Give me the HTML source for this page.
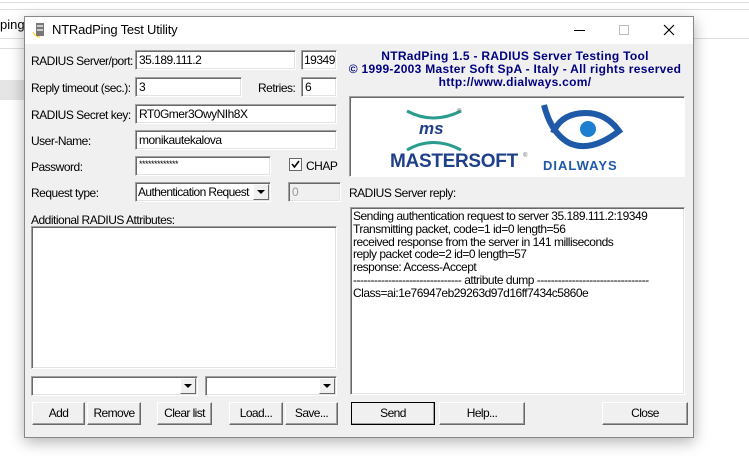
<!DOCTYPE html>
<html><head><style>
*{margin:0;padding:0;box-sizing:border-box}
body{width:749px;height:470px;background:#fff;position:relative;overflow:hidden;font-family:"Liberation Sans",sans-serif;font-size:12px;color:#000}
.a{position:absolute}
.t{position:absolute;white-space:nowrap;letter-spacing:-0.5px}
.f{position:absolute;background:#fff;border-top:1px solid #a0a0a0;border-left:1px solid #a0a0a0;border-right:1px solid #fff;border-bottom:1px solid #fff;box-shadow:inset 1px 1px 0 #696969,inset -1px -1px 0 #e3e3e3;padding:2px 3px;white-space:nowrap;letter-spacing:-0.5px;line-height:14px;overflow:hidden}
.b{position:absolute;background:#f0f0f0;border:1px solid;border-color:#fff #696969 #696969 #fff;box-shadow:inset -1px -1px 0 #a0a0a0;text-align:center;line-height:20px;letter-spacing:-0.6px}
.dd{position:absolute;width:16px;height:16px;background:#f0f0f0;border:1px solid;border-color:#fff #696969 #696969 #fff;top:1px;right:1px}
.dd:after{content:"";position:absolute;left:3px;top:5px;border:4px solid transparent;border-top:4px solid #000;border-bottom:0}
</style></head><body>
<div class="a" style="left:0;top:0;width:749px;height:3px;border-bottom:1px solid #ddd"></div>
<div class="a" style="left:0;top:9px;width:749px;border-top:1px solid #ddd"></div>
<div class="t" style="left:0;top:17px;font-size:13px;letter-spacing:0">ping</div>
<div class="a" style="left:0;top:38px;width:749px;border-top:1px solid #ddd"></div>
<div class="a" style="left:0;top:48px;width:24px;border-top:1px solid #ddd"></div>
<div class="a" style="left:0;top:80px;width:24px;height:20px;background:#e5e5e5"></div>
<div class="a" style="left:24px;top:16px;width:670px;height:422px;background:#f0f0f0;border:1px solid #888;box-shadow:0 4px 14px rgba(0,0,0,.3)"></div>
<div class="a" style="left:25px;top:17px;width:668px;height:27px;background:#fff"></div>
<svg class="a" style="left:32px;top:22px" width="16" height="16"><rect x="4" y="1" width="8" height="13" fill="#777"/><rect x="5" y="3" width="6" height="2" fill="#ccc"/><rect x="5" y="7" width="6" height="2" fill="#ccc"/><path d="M1 10 Q3 15 8 15" stroke="#fc0" fill="none"/></svg>
<div class="t" style="left:52px;top:22px;font-size:13px;letter-spacing:-0.2px">NTRadPing Test Utility</div>
<div class="a" style="left:574px;top:30px;width:11px;border-top:1px solid #000"></div>
<div class="a" style="left:619px;top:25px;width:10px;height:10px;border:1px solid #bbb"></div>
<svg class="a" style="left:663px;top:24px" width="12" height="12"><path d="M1 1L11 11M11 1L1 11" stroke="#000" stroke-width="1.2"/></svg>

<div class="t" style="left:31px;top:54px">RADIUS Server/port:</div>
<div class="f" style="left:135px;top:50px;width:161px;height:20px">35.189.111.2</div>
<div class="f" style="left:301px;top:50px;width:36px;height:20px;padding-left:2px">19349</div>
<div class="t" style="left:31px;top:81px">Reply timeout (sec.):</div>
<div class="f" style="left:135px;top:77px;width:107px;height:20px">3</div>
<div class="t" style="left:258px;top:81px">Retries:</div>
<div class="f" style="left:301px;top:77px;width:36px;height:20px">6</div>
<div class="t" style="left:31px;top:108px">RADIUS Secret key:</div>
<div class="f" style="left:135px;top:104px;width:202px;height:20px">RT0Gmer3OwyNIh8X</div>
<div class="t" style="left:31px;top:134px">User-Name:</div>
<div class="f" style="left:135px;top:130px;width:202px;height:20px">monikautekalova</div>
<div class="t" style="left:31px;top:160px">Password:</div>
<div class="f" style="left:135px;top:156px;width:136px;height:20px;font-size:9px;line-height:10px">*************</div>
<div class="a" style="left:289px;top:158px;width:13px;height:13px;background:#fff;border:1px solid #696969"></div>
<svg class="a" style="left:290px;top:159px" width="11" height="11"><path d="M2 5L4.5 8L9 2" stroke="#000" stroke-width="1.6" fill="none"/></svg>
<div class="t" style="left:306px;top:159px">CHAP</div>
<div class="t" style="left:31px;top:186px">Request type:</div>
<div class="f" style="left:135px;top:182px;width:136px;height:20px;padding-left:2px;letter-spacing:-0.6px">Authentication Request<div class="dd"></div></div>
<div class="f" style="left:288px;top:182px;width:53px;height:20px;background:#f0f0f0;color:#999">0</div>
<div class="t" style="left:31px;top:213px">Additional RADIUS Attributes:</div>
<div class="f" style="left:31px;top:226px;width:306px;height:143px"></div>
<div class="f" style="left:31px;top:376px;width:167px;height:20px"><div class="dd"></div></div>
<div class="f" style="left:205px;top:376px;width:132px;height:20px"><div class="dd"></div></div>
<div class="b" style="left:32px;top:402px;width:53px;height:23px">Add</div>
<div class="b" style="left:87px;top:402px;width:54px;height:23px">Remove</div>
<div class="b" style="left:157px;top:402px;width:55px;height:23px">Clear list</div>
<div class="b" style="left:229px;top:402px;width:54px;height:23px">Load...</div>
<div class="b" style="left:285px;top:402px;width:53px;height:23px">Save...</div>

<div class="a" style="left:345px;top:50px;width:340px;text-align:center;color:#000080;font-weight:bold;font-size:12px;line-height:13px;letter-spacing:0.3px">NTRadPing 1.5 - RADIUS Server Testing Tool<br>© 1999-2003 Master Soft SpA - Italy - All rights reserved<br>http://www.dialways.com/</div>
<div class="a" style="left:349px;top:96px;width:336px;height:81px;background:#fff;border:1px solid #a0a0a0;border-right-color:#fff;border-bottom-color:#fff;box-shadow:inset 1px 1px 0 #696969"></div>
<svg class="a" style="left:385px;top:105px" width="150" height="68"><path d="M22 6 Q48 20 76 6" stroke="#2a9d8f" stroke-width="3" fill="none"/><text x="34" y="29" font-family="Liberation Sans" font-weight="bold" font-style="italic" font-size="17" fill="#1e3f8a">ms</text><path d="M22 45 Q48 30 76 45" stroke="#2a9d8f" stroke-width="3" fill="none"/><text x="5" y="62" font-family="Liberation Sans" font-size="19" font-weight="bold" fill="#1e3f8a" letter-spacing="-0.3">MASTERSOFT</text><text x="138" y="52" font-size="6" fill="#666">®</text><text x="72" y="8" font-size="6" fill="#666">®</text></svg>
<svg class="a" style="left:541px;top:103px" width="92" height="70"><path d="M3 2 Q10 30 28 40 Q50 50 78 28 Q65 10 45 10 Q20 10 12 30" stroke="#1e5aa8" stroke-width="6" fill="none"/><circle cx="47" cy="26" r="8" fill="#1e7fd0"/><text x="2" y="67" font-family="Liberation Sans" font-weight="bold" font-size="13" fill="#1e5aa8" letter-spacing="1">DIALWAYS</text></svg>
<div class="t" style="left:349px;top:186px">RADIUS Server reply:</div>
<div class="f" style="left:350px;top:207px;width:335px;height:188px;line-height:12.8px;padding:2px 2px">Sending authentication request to server 35.189.111.2:19349<br>Transmitting packet, code=1 id=0 length=56<br>received response from the server in 141 milliseconds<br>reply packet code=2 id=0 length=57<br>response: Access-Accept<br>------------------------------- attribute dump --------------------------------<br>Class=ai:1e76947eb29263d97d16ff7434c5860e</div>
<div class="b" style="left:351px;top:402px;width:84px;height:23px;outline:1px solid #000;outline-offset:-1px">Send</div>
<div class="b" style="left:439px;top:402px;width:86px;height:23px">Help...</div>
<div class="b" style="left:602px;top:402px;width:86px;height:23px">Close</div>
</body></html>
